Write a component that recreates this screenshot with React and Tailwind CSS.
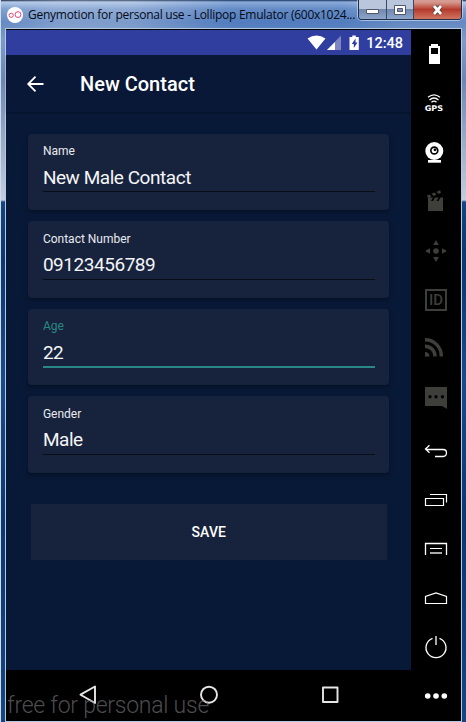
import React from "react";

const fields = [
  { label: "Name", value: "New Male Contact" },
  { label: "Contact Number", value: "09123456789" },
  { label: "Age", value: "22", active: true },
  { label: "Gender", value: "Male" },
];

function Field({ label, value, active }) {
  return (
    <div className="h-[76.5px] rounded-[4px] bg-[#17233d] px-[14.5px] pt-[9.5px] shadow-[0_2px_4px_rgba(0,0,0,0.4)]">
      <div className={`h-[16px] text-[12px] leading-[16px] ${active ? "text-[#2b8784]" : "text-[#e8eaee]"}`}>{label}</div>
      <div className={`flex items-center pt-[5px] text-[19px] leading-[26px] tracking-[-0.46px] text-[#f4f5f7] ${active ? "h-[34px] border-b-2 border-[#2b8784]" : "h-[33px] border-b border-[#080d18]"}`}>
        {value}
      </div>
    </div>
  );
}

const D = "#3e3e3a";
const W = "#ffffff";

const tools = [
  <g key="battery"><path fill={W} d="M431 44h7v2h2v18h-11V46h2z" /><path d="M431 48h7v6h-7z" fill="#000" /></g>,
  <g key="gps">
    <path d="M428 97.300Q434 92.500 440 97.300M429.500 100Q434 96 438.500 100M431.500 102.300Q434 100 436.500 102.300" fill="none" stroke={W} strokeWidth="1.300" />
    <text x="424.700" y="110.500" fontFamily="DejaVu Sans, sans-serif" fontWeight="bold" fontSize="7.800" textLength="18.500" lengthAdjust="spacingAndGlyphs" fill={W}>GPS</text>
  </g>,
  <g key="camera">
    <circle cx="434.300" cy="151" r="9" fill={W} /><circle cx="434.300" cy="150.500" r="4.300" fill="#000" />
    <circle cx="434.300" cy="150.500" r="2.600" fill={W} /><circle cx="435" cy="149.800" r="1.400" fill="#000" />
    <path d="M428 160h13v2.700h-13z" fill={W} />
  </g>,
  <g key="clapper" fill={D}>
    <path d="M428 201h15v10h-15z" /><path d="M428 197.500h5l-2 3.500h-3zM435 197.500h3.500l-2 3.500h-3.500zM440.500 197.500h2.500v3.500h-4.500z" />
    <path d="m427 195.500 2.500-1 2 2.300-3.500 1.500zM431.500 193.800l3-1.200 2 2.200-3 1.200zM436.500 191.800l3.500-1.500 1 2.500-2.500 1.100z" />
  </g>,
  <g key="move" fill={D}><circle cx="436" cy="251" r="2.800" /><path d="m436 240 2.800 5h-5.600zM436 262l2.800-5h-5.600zM425 251l5-2.800v5.600zM447 251l-5-2.800v5.600z" /></g>,
  <g key="id"><path d="M426 290h20v20h-20z" fill="none" stroke={D} strokeWidth="2" /><text x="429" y="305" fontFamily="Roboto, sans-serif" fontWeight="500" fontSize="14.500" textLength="14" lengthAdjust="spacingAndGlyphs" fill={D}>ID</text></g>,
  <g key="rss" fill="none" stroke={D} strokeWidth="3.400"><path d="M425 339.700A16.300 16.300 0 0 1 441.300 356.500M425 346.200A10 10 0 0 1 435 356.500" /><path d="M425 352a4.500 4.500 0 0 1 4.500 4.500H425z" stroke="none" fill={D} /></g>,
  <g key="chat"><path d="M425 387h22v22l-5-3h-17z" fill={D} /><g fill="#000"><circle cx="430" cy="396.700" r="1.700" /><circle cx="436" cy="396.700" r="1.700" /><circle cx="442.500" cy="396.700" r="1.700" /></g></g>,
  <path key="back" d="m429.500 445.300-4 3.700 4 3.700M425.700 449.500h17.500q3.300 0 3.300 3.300t-3.300 3.700H435" fill="none" stroke={W} strokeWidth="1.300" />,
  <path key="recent" d="M425.500 498.500h18v7h-18zM430 494.500h16.500v8" fill="none" stroke={W} strokeWidth="1.200" />,
  <g key="menu" fill="none" stroke={W}><path d="M425.500 555v-11.500h21V555" strokeWidth="1.300" /><path d="M430 548.500h12" /><path d="M430 553h12" stroke="#aaa" strokeWidth="2" /></g>,
  <path key="home" d="M425.500 603.500v-7l10.500-3.500 10.500 3.500v7z" fill="none" stroke={W} strokeWidth="1.200" />,
  <path key="power" d="M432.500 638.300a10 10 0 1 0 7 0M436 636v9" fill="none" stroke={W} strokeWidth="1.300" />,
  <g key="more" fill={W}><circle cx="427.700" cy="696" r="2.800" /><circle cx="436" cy="696" r="2.800" /><circle cx="444.300" cy="696" r="2.800" /></g>,
];

function TitleBar() {
  return (
    <div className="flex h-[28px] shrink-0 items-start bg-[linear-gradient(90deg,transparent_0px,rgba(190,205,230,0.3)_60px,rgba(190,205,230,0.25)_130px,rgba(40,95,180,0.3)_230px,rgba(40,95,180,0.3)_340px,transparent_400px)] pl-[6px]">
      <svg className="mt-[7px] shrink-0" width="16" height="16" viewBox="0 0 16 16">
        <circle cx="8" cy="8" r="8" fill="#fff" />
        <circle cx="4.200" cy="8.300" r="2.100" fill="none" stroke="#e8467c" strokeWidth="1" />
        <circle cx="11" cy="7.600" r="2.900" fill="none" stroke="#e8467c" strokeWidth="1" />
      </svg>
      <div className="ml-[5px] mt-[7px] w-[330px] shrink-0 whitespace-nowrap font-['Open_Sans',sans-serif] text-[12px] leading-[16px] tracking-[-0.26px] text-[#050a16]">
        Genymotion for personal use - Lollipop Emulator (600x1024...
      </div>
      <div className="flex h-[20px] w-[104px] shrink-0 overflow-hidden rounded-b-[4px] border border-t-0 border-[#232e49] shadow-[0_0_0_1px_rgba(220,235,255,0.55)]">
        <div className="flex w-[28px] items-center justify-center border-r border-[#39486a] bg-linear-to-b from-[#b9c6dc] from-45% via-[#7288ae] via-50% to-[#8ba5cb]">
          <svg className="mt-[5px]" width="13" height="6"><path d="M.5.5h12v4H.5z" fill="#fff" stroke="#525866" /></svg>
        </div>
        <div className="flex w-[27px] items-center justify-center border-r border-[#39486a] bg-linear-to-b from-[#b9c6dc] from-45% via-[#7288ae] via-50% to-[#8ba5cb]">
          <svg width="12" height="10"><path d="M.5.5h11v9H.5z" fill="#fff" stroke="#4f5768" /><path d="M3.500 3.500h5v3h-5z" fill="#7f93b5" stroke="#4f5768" /></svg>
        </div>
        <div className="flex flex-1 items-center justify-center bg-linear-to-b from-[#d59a91] from-10% via-[#b63a2c] via-50% to-[#cf7460]">
          <svg width="13" height="12" viewBox="0 0 13 12"><path d="m3 2 7 8M10 2 3 10" stroke="#5d4144" strokeWidth="4.500" /><path d="m3 2 7 8M10 2 3 10" stroke="#fff" strokeWidth="2.700" /></svg>
        </div>
      </div>
    </div>
  );
}

function StatusBar() {
  return (
    <div className="flex h-[25px] shrink-0 items-start justify-end bg-[#303f9f] pr-[8px]">
      <svg className="mr-[5px] mt-[4px]" width="54" height="18" viewBox="307 34 54 18">
        <path d="M307.500 38.500q9-6 18 0L316.500 49.500z" fill="#fff" />
        <path d="M341 35.500V50h-14z" fill="#7d86c1" /><path d="M335 42v8h-8z" fill="#fff" />
        <path d="M352.300 35.500h3.500V37h3v13h-9.300V37h2.800z" fill="#fff" />
        <path d="m355.500 38.500-3.700 5.500h2v4l3.700-5.500h-2z" fill="#303f9f" />
      </svg>
      <div className="pt-[1px] text-[14.5px] font-medium leading-[26px] text-white">12:48</div>
    </div>
  );
}

function Phone() {
  return (
    <div className="flex w-[405px] shrink-0 flex-col">
      <StatusBar />
      <div className="z-10 flex h-[57px] shrink-0 items-center bg-[#081836] shadow-[0_1px_2px_rgba(0,0,0,0.3)]">
        <svg className="ml-[20px]" width="18" height="18" viewBox="0 0 18 18"><path d="M17.500 9H2.500M9.500 1.700 2.200 9l7.300 7.300" fill="none" stroke="#fff" strokeWidth="1.800" /></svg>
        <h1 className="ml-[36px] pt-[1px] text-[20px] font-medium text-white">New Contact</h1>
      </div>
      <div className="flex h-[558px] shrink-0 flex-col bg-[#081938] pl-[22.4px] pr-[21.8px] pt-[21.5px]">
        <div className="flex flex-col gap-[11px]">
          {fields.map((f) => <Field key={f.label} {...f} />)}
        </div>
        <button className="mx-[2.5px] mt-[31.5px] h-[56px] shrink-0 bg-[#17233d] pt-[1px] text-[14px] font-medium tracking-[0.1px] text-white">SAVE</button>
      </div>
      <div className="relative flex-1 bg-black">
        <svg className="block" width="405" height="49" viewBox="6 670 405 49" fill="none" stroke="#e6e6e6" strokeWidth="1.900" strokeLinejoin="round">
          <path d="M95 686.500v16.500l-14.500-8.300z" /><circle cx="209" cy="694.700" r="8" /><path d="M323 687.500h14.500V702H323z" />
        </svg>
        <div className="absolute left-[1px] top-[22px] whitespace-nowrap text-[23px] font-light leading-[28px] tracking-[-0.25px] text-[#828282]/60">free for personal use</div>
      </div>
    </div>
  );
}

export default function App() {
  return (
    <div className="flex h-[722px] w-[466px] flex-col overflow-hidden border-l border-[#cfdcec] bg-[linear-gradient(180deg,#16233f_0px,#b4cbea_2px,#7f9fce_9px,#6489c2_22px,#7c9bc8_40px,#6b88b4_80px,#9aabc6_140px,#c3cedd_200px,#14457f_202px,#0b3772_260px,#1b4a8b_380px,#0b3772_520px,#164582_722px)] font-[Roboto,sans-serif]">
      <TitleBar />
      <div className="ml-[4px] flex h-[694px] w-[457px] shrink-0 border border-[#b3c8e2] bg-black pt-px">
        <Phone />
        <div className="flex flex-1 flex-col bg-black">
          {tools.map((icon, i) => (
            <svg key={i} className="block shrink-0" width="49" height="49" viewBox={`411 ${30 + 49 * i} 49 49`}>{icon}</svg>
          ))}
        </div>
      </div>
    </div>
  );
}
